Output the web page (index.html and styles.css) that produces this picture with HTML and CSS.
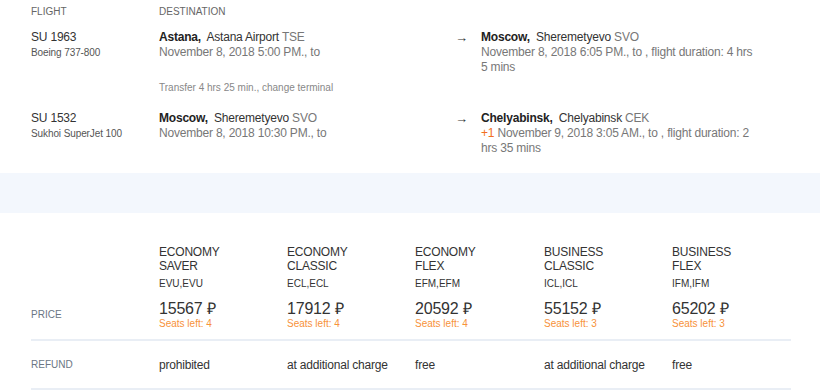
FILE: index.html
```html
<!DOCTYPE html>
<html lang="en">
<head>
    <meta charset="UTF-8">
    <meta name="viewport" content="width=device-width, initial-scale=1.0">
    <title>Flight details</title>
    <link rel="stylesheet" href="styles.css">
</head>
<body>
    <div class="flights">
        <div class="flights-head">
            <span>Flight</span>
            <span>Destination</span>
        </div>

        <div class="leg">
            <div class="leg-flight">
                <div class="num">SU 1963</div>
                <div class="plane">Boeing 737-800</div>
            </div>
            <div class="point">
                <div><b class="city">Astana,</b> Astana Airport <span class="code">TSE</span></div>
                <div class="when">November 8, 2018 5:00 PM., to</div>
            </div>
            <div class="arrow">&rarr;</div>
            <div class="point">
                <div><b class="city">Moscow,</b> Sheremetyevo <span class="code">SVO</span></div>
                <div class="when">November 8, 2018 6:05 PM., to , flight duration: 4 hrs 5 mins</div>
            </div>
        </div>

        <div class="transfer">Transfer 4 hrs 25 min., change terminal</div>

        <div class="leg">
            <div class="leg-flight">
                <div class="num">SU 1532</div>
                <div class="plane">Sukhoi SuperJet 100</div>
            </div>
            <div class="point">
                <div><b class="city">Moscow,</b> Sheremetyevo <span class="code">SVO</span></div>
                <div class="when">November 8, 2018 10:30 PM., to</div>
            </div>
            <div class="arrow">&rarr;</div>
            <div class="point">
                <div><b class="city">Chelyabinsk,</b> Chelyabinsk <span class="code">CEK</span></div>
                <div class="when"><span class="plus">+1</span> November 9, 2018 3:05 AM., to , flight duration: 2 hrs 35 mins</div>
            </div>
        </div>
    </div>

    <div class="band"></div>

    <div class="fares">
        <div class="fare-row">
            <div class="row-label">Price</div>
            <div class="fare">
                <div class="fare-name">Economy<br>Saver</div>
                <div class="fare-code">EVU,EVU</div>
                <div class="fare-price">15567 &#8381;</div>
                <div class="seats">Seats left: 4</div>
            </div>
            <div class="fare">
                <div class="fare-name">Economy<br>Classic</div>
                <div class="fare-code">ECL,ECL</div>
                <div class="fare-price">17912 &#8381;</div>
                <div class="seats">Seats left: 4</div>
            </div>
            <div class="fare">
                <div class="fare-name">Economy<br>Flex</div>
                <div class="fare-code">EFM,EFM</div>
                <div class="fare-price">20592 &#8381;</div>
                <div class="seats">Seats left: 4</div>
            </div>
            <div class="fare">
                <div class="fare-name">Business<br>Classic</div>
                <div class="fare-code">ICL,ICL</div>
                <div class="fare-price">55152 &#8381;</div>
                <div class="seats">Seats left: 3</div>
            </div>
            <div class="fare">
                <div class="fare-name">Business<br>Flex</div>
                <div class="fare-code">IFM,IFM</div>
                <div class="fare-price">65202 &#8381;</div>
                <div class="seats">Seats left: 3</div>
            </div>
        </div>

        <div class="fare-row refund">
            <div class="row-label">Refund</div>
            <div>prohibited</div>
            <div>at additional charge</div>
            <div>free</div>
            <div>at additional charge</div>
            <div>free</div>
        </div>
    </div>
</body>
</html>
```

FILE: styles.css
```css
* {
    margin: 0;
    padding: 0;
    box-sizing: border-box;
}
body {
    font-family: "Liberation Sans", Arial, sans-serif;
    color: #333;
    background: white;
    width: 820px;
    height: 391px;
    overflow: hidden;
}
.flights {
    padding: 5px 0 0 31px;
}
.flights-head {
    display: grid;
    grid-template-columns: 128px 1fr;
    font-size: 10px;
    line-height: 14px;
    text-transform: uppercase;
    color: #666;
}
.leg {
    display: grid;
    grid-template-columns: 128px 296px 26px 276px;
    margin-top: 11px;
    font-size: 12px;
    line-height: 15px;
    letter-spacing: -0.2px;
}
.leg + .transfer {
    margin-top: 6px;
}
.transfer + .leg {
    margin-top: 16px;
}
.num {
    color: #333;
}
.plane {
    font-size: 10px;
    letter-spacing: -0.1px;
    color: #555;
}
.city {
    color: #222;
    margin-right: 3px;
}
.code {
    color: #777;
}
.when {
    color: #777;
}
.plus {
    color: #f26f21;
}
.arrow {
    font-size: 13px;
    color: #333;
}
.transfer {
    margin-left: 128px;
    font-size: 10px;
    line-height: 14px;
    color: #888;
}
.band {
    height: 40px;
    margin-top: 17px;
    background: #f3f7fd;
}
.fares {
    padding-top: 32px;
}
.fare-row {
    display: grid;
    grid-template-columns: 128px 128px 128px 129px 128px 1fr;
    margin: 0 29px 0 31px;
    padding-bottom: 9px;
    border-bottom: 2px solid #e9eef5;
    letter-spacing: -0.2px;
}
.row-label {
    align-self: end;
    margin-bottom: 8px;
    font-size: 10px;
    line-height: 14px;
    letter-spacing: 0;
    text-transform: uppercase;
    color: #6b7684;
}
.fare-name {
    font-size: 12px;
    line-height: 14px;
    text-transform: uppercase;
    color: #333;
}
.fare-code {
    margin-top: 4px;
    font-size: 10px;
    line-height: 14px;
    letter-spacing: 0;
    color: #333;
}
.fare-price {
    margin-top: 9px;
    font-size: 16px;
    line-height: 18px;
    color: #333;
}
.seats {
    font-size: 10px;
    line-height: 12px;
    letter-spacing: 0;
    color: #f7923a;
}
.refund {
    padding: 16px 0 15px;
    font-size: 12px;
    line-height: 16px;
}
.refund .row-label {
    align-self: center;
    margin-bottom: 0;
}
```
